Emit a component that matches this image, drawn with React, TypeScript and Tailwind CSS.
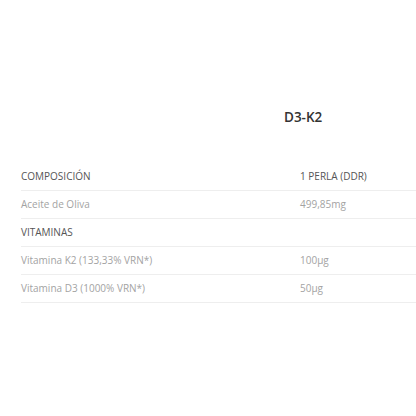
const rows = [
  { name: "Aceite de Oliva", value: "499,85mg" },
  { name: "VITAMINAS", value: "", section: true },
  { name: "Vitamina K2 (133,33% VRN*)", value: "100µg" },
  { name: "Vitamina D3 (1000% VRN*)", value: "50µg" },
];

export default function App() {
  return (
    <div className="w-[416px] h-[416px] bg-white overflow-hidden font-['Open_Sans',sans-serif]">
      <div className="pt-[107px] pl-[284px]">
        <h2 className="text-[13.5px] leading-[20px] font-semibold text-[#333]">D3-K2</h2>
      </div>
      <div className="pl-[21px] pt-[36px]">
        {/* header */}
        <div className="flex h-[28px] items-center border-b border-[#eeeeee] text-[10px] font-medium text-[#555]">
          <div className="w-[279px]">COMPOSICIÓN</div>
          <div>1 PERLA (DDR)</div>
        </div>
        {rows.map((r) => (
          <div
            key={r.name}
            className={`flex h-[28px] items-center border-b border-[#eeeeee] text-[10px] ${
              r.section ? "font-medium text-[#555]" : "text-[#a3a3a3]"
            }`}
          >
            <div className="w-[279px]">{r.name}</div>
            <div>{r.value}</div>
          </div>
        ))}
      </div>
    </div>
  );
}
